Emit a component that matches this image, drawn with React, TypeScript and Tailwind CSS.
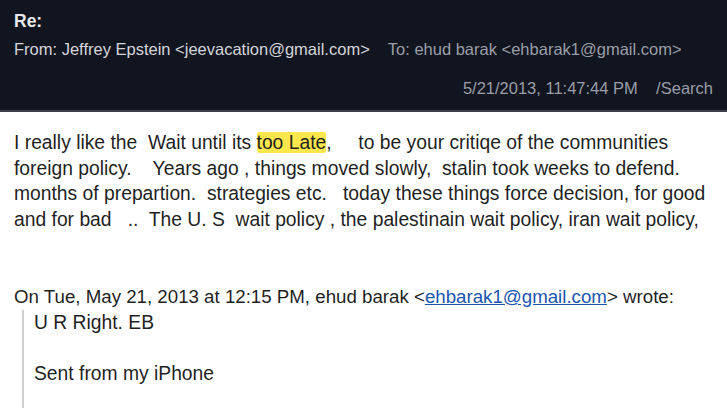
import React from "react";

export default function App() {
  return (
    <div className="w-[727px] h-[408px] overflow-hidden bg-white" style={{ fontFamily: '"Liberation Sans", Arial, sans-serif' }}>
      <div className="h-[112px] bg-[#11151f] border-b-2 border-[#3a3f4a] px-[14px] pt-[9px]">
        <div className="text-[17.5px] leading-[24px] font-bold text-[#e8e9ec]">Re:</div>
        <div className="mt-[6px] text-[16.5px] leading-[20px] flex whitespace-pre">
          <span className="text-[#d4d6db]">From: Jeffrey Epstein &lt;jeevacation@gmail.com&gt;</span>
          <span className="text-[#9a9ea8]">{"    To: ehud barak <ehbarak1@gmail.com>"}</span>
        </div>
        <div className="mt-[19px] text-[16.5px] leading-[20px] flex justify-end text-[#9a9ea8] whitespace-pre">
          <span>{"5/21/2013, 11:47:44 PM    /Search"}</span>
        </div>
      </div>
      <div className="px-[14px] pt-[18px] text-[19.3px] leading-[25.5px] text-[#1f1f1f] whitespace-pre">
        <div>
          {"I really like the  Wait until its "}
          <span className="bg-[#fde74c] rounded-[2px]">too Late</span>
          {",     to be your critiqe of the communities"}
        </div>
        <div>{"foreign policy.    Years ago , things moved slowly,  stalin took weeks to defend."}</div>
        <div>{"months of prepartion.  strategies etc.   today these things force decision, for good"}</div>
        <div>{"and for bad   ..  The U. S  wait policy , the palestinain wait policy, iran wait policy,"}</div>
        <div className="h-[52px]" />
        <div className="text-[18.7px]">
          {"On Tue, May 21, 2013 at 12:15 PM, ehud barak <"}
          <span className="text-[#1a55b0] underline">ehbarak1@gmail.com</span>
          {"> wrote:"}
        </div>
        <div className="ml-[8px] border-l-2 border-[#cfcfcf] pl-[10px] pb-[40px]">
          <div>U R Right. EB</div>
          <div>{" "}</div>
          <div>Sent from my iPhone</div>
        </div>
      </div>
    </div>
  );
}
